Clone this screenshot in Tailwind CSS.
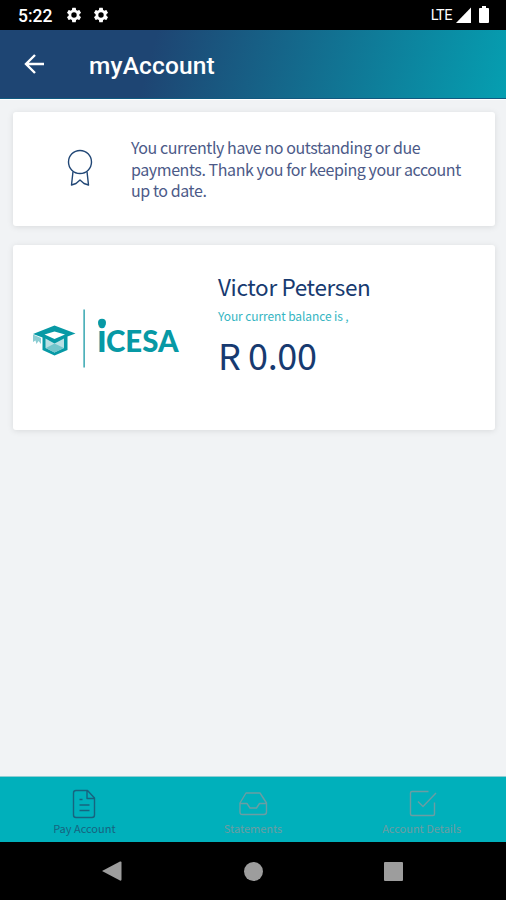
<!DOCTYPE html>
<html lang="en">
<head>
<meta charset="utf-8">
<meta name="viewport" content="width=device-width, initial-scale=1">
<title>myAccount</title>
<script src="https://cdn.jsdelivr.net/npm/@tailwindcss/browser@4"></script>
</head>
<body class="flex h-[900px] w-[506px] flex-col overflow-hidden bg-[#f1f3f5] font-['Noto_Sans_CJK_JP',sans-serif]">
  <div class="flex h-[30px] shrink-0 items-center bg-black pl-[18px] pr-[16px] font-[Roboto,sans-serif] text-white">
    <span class="mt-px w-[34px] text-[17.5px] font-medium leading-[30px] whitespace-nowrap">5:22</span>
    <svg class="ml-[13px] size-[18px]" viewBox="0 0 24 24" fill="currentColor"><path id="gear" d="M19.14 12.94c.04-.3.06-.61.06-.94s-.02-.64-.07-.94l2.03-1.58a.49.49 0 0 0 .12-.61l-1.92-3.32a.49.49 0 0 0-.59-.22l-2.39.96a7 7 0 0 0-1.62-.94l-.36-2.54a.48.48 0 0 0-.48-.41h-3.84a.47.47 0 0 0-.47.41l-.36 2.54c-.59.24-1.13.57-1.62.94l-2.39-.96a.48.48 0 0 0-.59.22L2.74 8.87a.47.47 0 0 0 .12.61l2.03 1.58c-.05.3-.09.63-.09.94s.02.64.07.94l-2.03 1.58a.49.49 0 0 0-.12.61l1.92 3.32c.12.22.37.29.59.22l2.39-.96c.5.38 1.03.7 1.62.94l.36 2.54c.05.24.24.41.48.41h3.84c.24 0 .44-.17.47-.41l.36-2.54a7 7 0 0 0 1.62-.94l2.39.96c.22.08.47 0 .59-.22l1.92-3.32a.47.47 0 0 0-.12-.61zM12 15.6a3.6 3.6 0 1 1 0-7.2 3.6 3.6 0 0 1 0 7.2z"/></svg>
    <svg class="ml-[9px] size-[18px]" viewBox="0 0 24 24" fill="currentColor"><use href="#gear"/></svg>
    <span class="mt-px ml-auto text-[14.5px] leading-[30px] tracking-[-0.5px]">LTE</span>
    <svg class="ml-[4px] h-[16px] w-[15px]" viewBox="0 0 15 16" fill="currentColor"><path d="M15 .5V16H0z"/></svg>
    <svg class="ml-[8px] mr-px mb-px h-[17px] w-[10px]" viewBox="0 0 10 18" preserveAspectRatio="none" fill="currentColor"><path d="M3 0h4v2h2q1 0 1 1v14q0 1-1 1H1q-1 0-1-1V3q0-1 1-1h2z"/></svg>
  </div>

  <header class="flex h-[69px] shrink-0 items-center border-b border-[#115a80] bg-[linear-gradient(105deg,#1e4573_0%,#1e4573_30%,#059fb1_100%)] pl-[24px] text-white">
    <svg class="size-[20px]" viewBox="0 0 20 20" fill="none" stroke="currentColor" stroke-width="2.4"><path d="M20 10H2M11 1l-9 9 9 9"/></svg>
    <h1 class="ml-[45px] mt-[3px] font-[Roboto,sans-serif] text-[24.5px] font-medium leading-8 tracking-[0.15px]">myAccount</h1>
  </header>

  <main class="flex grow flex-col gap-[19px] border-t border-white px-[13px] pt-[12px]">
    <section class="flex h-[114px] rounded-[3px] bg-white shadow-[0_1px_6px_rgba(0,0,0,0.1)] mr-[-2px]">
      <svg class="ml-[54px] mt-[37px] h-[38px] w-[26px] shrink-0" viewBox="0 0 26 38" fill="none" stroke="#204675" stroke-width="1.4" stroke-linejoin="round"><circle cx="13" cy="13" r="11.5"/><path d="M6 22.5L4.5 36l4.500-1.500 4-3.500 4 3.500 4.500 1.500L20 22.5"/></svg>
      <p class="ml-[38px] mt-[25px] text-[16px] leading-[21.7px] tracking-[-0.42px] whitespace-nowrap text-[#4c5a88]">You currently have no outstanding or due<br>payments. Thank you for keeping your account<br>up to date.</p>
    </section>

    <section class="mr-[-2px] flex h-[185px] rounded-[3px] bg-white shadow-[0_1px_6px_rgba(0,0,0,0.1)]">
      <svg class="ml-[17px] mt-[61px] h-[66px] w-[152px] shrink-0" viewBox="30 306 152 66" fill="#0799a5">
        <path d="M33 334L54.500 325.500 75.500 333.500 67.500 336.500V350L54.500 355.500 42.500 350V337.500z"/>
        <path d="M44.500 334.500L54.500 331.500 65 334.500 54.500 339z" fill="#fff"/>
        <path d="M45.500 338.500L54.500 343.500 64 338.500V348L54.500 352.500 45.500 348z" fill="#b9e0e4"/>
        <path d="M46 348L54.500 343.500 64 348 54.500 352.500z" fill="#72c5cb"/>
        <path d="M33 334.500L41 338V344L38.500 341 36.500 344 35.500 340.500 33 342z" fill="#8ccdd3"/>
        <path d="M83.300 309.500H85V367.500H83.300z" fill="#4eb1ba"/>
        <circle cx="102" cy="322.800" r="4"/>
        <text x="96.800" y="352" font-family="Lato" font-weight="700" font-size="40">i</text>
        <text x="106" y="352" font-family="Lato" font-weight="900" font-size="30" textLength="72.500" lengthAdjust="spacingAndGlyphs">CESA</text>
      </svg>
      <div class="ml-[36px] mt-[25px] whitespace-nowrap text-[#173a70]">
        <h2 class="text-[22.5px] leading-[32px] tracking-[-0.35px]">Victor Petersen</h2>
        <p class="mt-[5px] text-[12px] leading-[18px] tracking-[-0.1px] text-[#35b5c2]">Your current balance is ,</p>
        <p class="mt-[4px] text-[36px] leading-[50px] tracking-[-0.4px]">R 0.00</p>
      </div>
    </section>
  </main>

  <nav class="grid h-[66px] shrink-0 grid-cols-3 border-t border-[#8fcdd2] bg-[#00b0bb] text-[11px] leading-[14px] text-[#6b9da3]">
    <div class="flex flex-col items-center gap-[2px] pt-[12px] text-[#17637f]">
      <svg class="size-[30px]" viewBox="0 0 30 30" fill="none" stroke="currentColor" stroke-width="1.400" stroke-linejoin="round"><path d="M18.500 1.500H7Q4.500 1.500 4.500 4V26Q4.500 28.500 7 28.500H23Q25.500 28.500 25.500 26V9zM18 1.500V9.500H25.500M10.500 10.500H13.500M10.500 16H20.500M10.500 21.500H20.500"/></svg>
      <span>Pay Account</span>
    </div>
    <div class="flex flex-col items-center gap-[2px] pt-[12px]">
      <svg class="size-[30px]" viewBox="0 0 30 30" fill="none" stroke="currentColor" stroke-width="1.400" stroke-linejoin="round"><path d="M8 4H22L28.500 14V23Q28.500 25.500 26 25.500H4.500Q2 25.500 2 23V14zM2 14.500H9L12 19H18.500L21.500 14.500H28.500"/></svg>
      <span>Statements</span>
    </div>
    <div class="flex flex-col items-center gap-[2px] pt-[12px]">
      <svg class="size-[30px]" viewBox="0 0 30 30" fill="none" stroke="currentColor" stroke-width="1.400" stroke-linejoin="round"><path d="M21.500 2.500H5Q3.500 2.500 3.500 4V25Q3.500 26.500 5 26.500H26Q27.500 26.500 27.500 25V13.500M11 12.500L16 17.500 29 4"/></svg>
      <span>Account Details</span>
    </div>
  </nav>

  <div class="flex h-[58px] shrink-0 items-center bg-black text-[#9d9d9d]">
    <svg class="ml-[102px] h-[22px] w-[20px]" viewBox="0 0 20 22" fill="currentColor"><path d="M0 11L18 1.500Q19.500 1 19.500 2.500V19.500Q19.500 21 18 20.500z"/></svg>
    <div class="ml-[122px] size-[19px] rounded-full bg-[#9d9d9d]"></div>
    <div class="ml-[121px] size-[19px] rounded-[1px] bg-[#9d9d9d]"></div>
  </div>
</body>
</html>
